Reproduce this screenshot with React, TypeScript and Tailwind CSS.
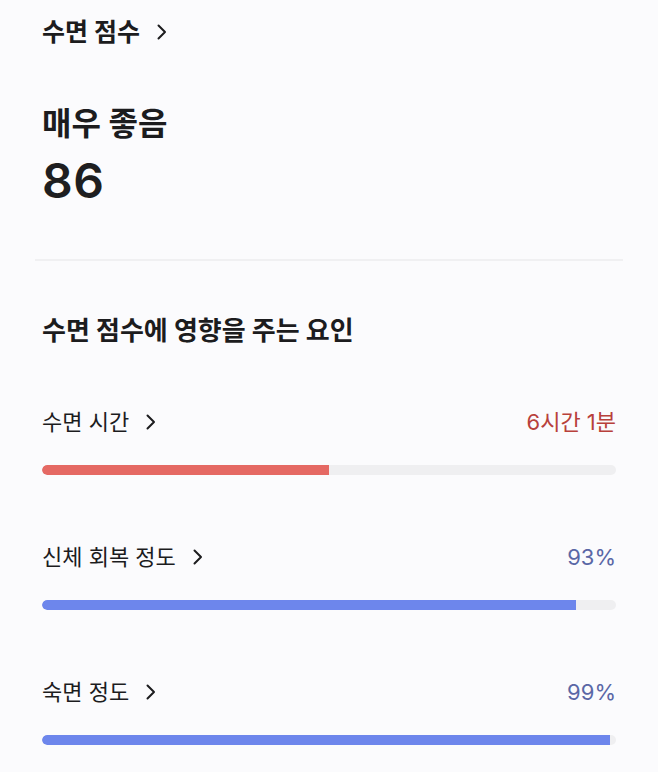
type Factor = {
  label: string;
  value: string;
  percent: number;
  tone: "red" | "blue";
};

const factors: Factor[] = [
  { label: "수면 시간", value: "6시간 1분", percent: 50, tone: "red" },
  { label: "신체 회복 정도", value: "93%", percent: 93, tone: "blue" },
  { label: "숙면 정도", value: "99%", percent: 99, tone: "blue" },
];

function Chevron({ className }: { className?: string }) {
  return (
    <svg viewBox="0 0 10 16" fill="none" className={className}>
      <path d="M1.5 1.5 8 8l-6.5 6.5" stroke="currentColor" strokeWidth={2} strokeLinecap="round" strokeLinejoin="round" />
    </svg>
  );
}

function FactorRow({ factor, first }: { factor: Factor; first: boolean }) {
  const isRed = factor.tone === "red";
  return (
    <div className={first ? "mt-[62px]" : "mt-[68px]"}>
      <div className="flex items-center justify-between leading-[28px]">
        <div className="flex items-center text-[22px] text-[#1c1c1e]">
          <span>{factor.label}</span>
          <Chevron className="ml-[17px] h-[16px] w-[10px]" />
        </div>
        <span className={isRed ? "text-[22px] text-[#b8403b]" : "text-[22px] text-[#5a67a6]"}>
          {factor.value}
        </span>
      </div>
      <div className="mt-[29px] h-[10px] w-full overflow-hidden rounded-full bg-[#efeff1]">
        <div
          className={isRed ? "h-full rounded-l-full bg-[#e56964]" : "h-full rounded-l-full bg-[#6d86ec]"}
          style={{ width: `${factor.percent}%` }}
        />
      </div>
    </div>
  );
}

export default function App() {
  return (
    <div
      className="min-h-[772px] w-[658px] bg-[#fbfbfd] px-[35px] pt-[17px] text-[#1c1c1e]"
      style={{ fontFamily: 'Inter, "Noto Sans CJK KR", sans-serif' }}
    >
      <div className="px-[7px]">
        <div className="flex items-center text-[25px] font-bold leading-[30px]">
          <span>수면 점수</span>
          <Chevron className="ml-[17px] h-[16px] w-[10px]" />
        </div>

        <div className="mt-[57px] text-[32px] font-bold leading-[40px]">매우 좋음</div>
        <div className="mt-[11px] text-[48px] font-semibold leading-[52px] tracking-[0.5px] text-[#1e1e20]">86</div>
      </div>

      <div className="mt-[52px] h-[2px] w-full bg-[#f0f0f2]" />

      <div className="px-[7px] pb-[30px]">
        <div className="mt-[55px] text-[26px] font-bold leading-[30px]">수면 점수에 영향을 주는 요인</div>
        {factors.map((f, i) => (
          <FactorRow key={f.label} factor={f} first={i === 0} />
        ))}
      </div>
    </div>
  );
}
